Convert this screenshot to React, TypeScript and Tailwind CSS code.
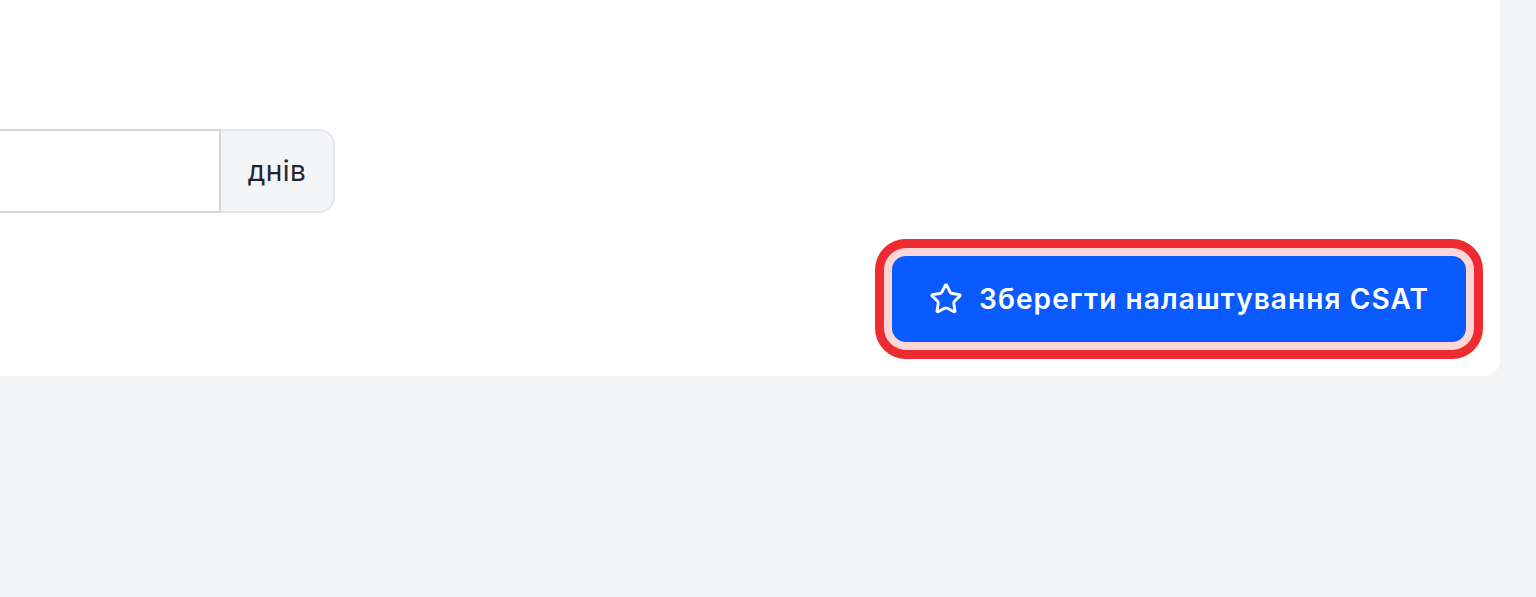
import { Star } from 'lucide-react'

export default function App() {
  return (
    <div className="min-h-[597px] w-full overflow-hidden bg-[#f4f5f7] font-['Inter',sans-serif]">
      <div className="-ml-10 w-[1540px] rounded-br-2xl bg-white px-[34px] pt-[129px] pb-[34px]">
        <div className="flex">
          <input
            type="text"
            className="h-[84px] w-[227px] border-2 border-[#d3d5da] bg-white outline-none"
          />
          <span className="flex h-[84px] w-[114px] items-center justify-center rounded-r-[16px] border-2 border-l-0 border-[#e4e6ea] bg-[#f4f5f7] text-[28px] tracking-[0.5px] text-[#1f2433]">
            днів
          </span>
        </div>
        <div className="mt-[43px] flex justify-end">
          <button className="inline-flex h-[86px] w-[574px] items-center gap-[16px] rounded-[14px] bg-[#0a5bff] pl-[37px] text-[28px] font-semibold tracking-[1.1px] text-white shadow-[0_0_0_8px_#fdd6d7,0_0_0_17px_#ee2b30]">
            <Star size={34} strokeWidth={2} />
            Зберегти налаштування CSAT
          </button>
        </div>
      </div>
    </div>
  )
}
